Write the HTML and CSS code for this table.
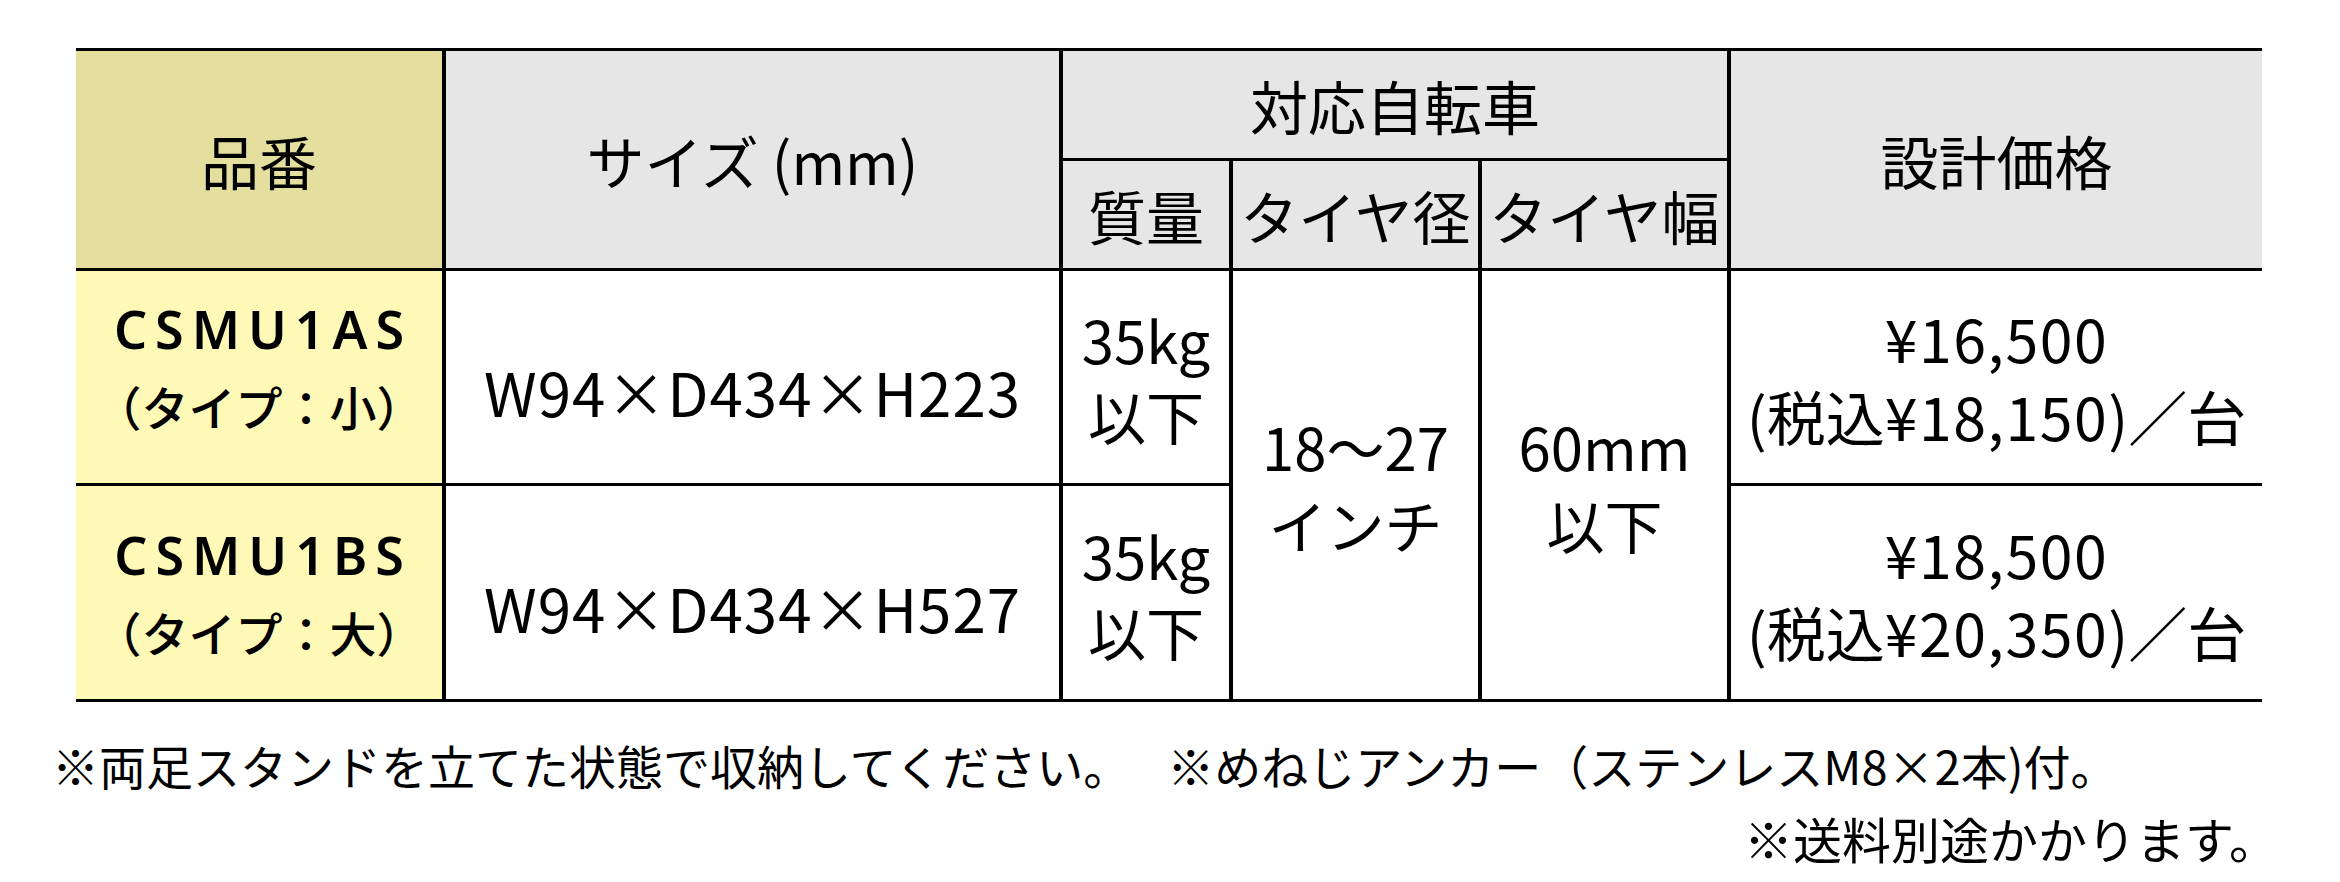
FILE: index.html
```html
<!DOCTYPE html>
<html lang="ja">
<head>
<meta charset="utf-8">
<title>CSMU1 仕様表</title>
<link rel="stylesheet" href="styles.css">
</head>
<body>
<main class="page">
  <div class="spec">
    <div class="cell h-code">品番</div>
    <div class="cell h-size">サイズ (mm)</div>
    <div class="cell h-bike">対応自転車</div>
    <div class="cell h-price">設計価格</div>
    <div class="cell h-sub">質量</div>
    <div class="cell h-sub">タイヤ径</div>
    <div class="cell h-sub">タイヤ幅</div>

    <div class="cell code code-a"><span class="model">CSMU1AS</span><span class="type">（タイプ：小）</span></div>
    <div class="cell size">W94×D434×H223</div>
    <div class="cell weight">35kg<br>以下</div>
    <div class="cell tyre-d">18～27<br>インチ</div>
    <div class="cell tyre-w">60mm<br>以下</div>
    <div class="cell price"><span class="num">¥16,500</span><span>(税込<span class="num">¥18,150</span>)／台</span></div>

    <div class="cell code"><span class="model">CSMU1BS</span><span class="type">（タイプ：大）</span></div>
    <div class="cell size">W94×D434×H527</div>
    <div class="cell weight">35kg<br>以下</div>
    <div class="cell price"><span class="num">¥18,500</span><span>(税込<span class="num">¥20,350</span>)／台</span></div>
  </div>

  <div class="notes">
    <p class="note-line"><span>※両足スタンドを立てた状態で収納してください。</span><span class="note-gap">※めねじアンカー（ステンレスM8×2本)付。</span></p>
    <p class="note-line note-right">※送料別途かかります。</p>
  </div>
</main>
</body>
</html>
```

FILE: styles.css
```css
html, body {
  margin: 0;
  padding: 0;
  background: #ffffff;
}

body {
  font-family: "Noto Sans CJK JP", "Noto Sans", sans-serif;
  color: #000000;
}

.page {
  width: 2226px;
  padding: 48px 0 0 52px;
}

.spec {
  margin-left: 24px;
  width: 2186px;
  display: grid;
  grid-template-columns: 366px 613px 166px 245px 245px 531px;
  grid-template-rows: 107px 107px 212px 213px;
  column-gap: 4px;
  row-gap: 3px;
  background: #000000;
  border-top: 3px solid #000000;
  border-bottom: 3px solid #000000;
}

.cell {
  background: #ffffff;
  display: flex;
  flex-direction: column;
  align-items: center;
  justify-content: center;
  text-align: center;
  font-size: 58px;
  line-height: 78px;
  white-space: nowrap;
}

.h-code {
  grid-column: 1;
  grid-row: 1 / span 2;
  background: #e5df9f;
}

.h-size {
  grid-column: 2;
  grid-row: 1 / span 2;
  background: #e6e6e6;
}

.h-bike {
  grid-column: 3 / span 3;
  grid-row: 1;
  background: #e6e6e6;
}

.h-price {
  grid-column: 6;
  grid-row: 1 / span 2;
  background: #e6e6e6;
}

.h-sub {
  background: #e6e6e6;
}

.code {
  background: #fef9b6;
  font-weight: 500;
  line-height: 77px;
}

.code-a {
  padding-bottom: 20px;
}

.model {
  font-family: "Noto Sans", "Noto Sans CJK JP", sans-serif;
  font-size: 52px;
  font-weight: 600;
  letter-spacing: 8px;
  padding-left: 8px;
}

.type {
  font-size: 47px;
}

.size {
  font-size: 60px;
  letter-spacing: 1px;
  padding-top: 28px;
}

.weight {
  line-height: 76px;
}

.price {
  font-size: 59px;
}

.price .num {
  letter-spacing: 1.5px;
}

.tyre-d {
  grid-column: 4;
  grid-row: 3 / span 2;
}

.tyre-w {
  grid-column: 5;
  grid-row: 3 / span 2;
}

.notes {
  margin-top: 26px;
  font-size: 47px;
  line-height: 73px;
}

.note-line {
  margin: 0;
  display: flex;
  white-space: nowrap;
}

.note-gap {
  margin-left: 37px;
}

.note-right {
  justify-content: flex-end;
  font-size: 49px;
}
```
